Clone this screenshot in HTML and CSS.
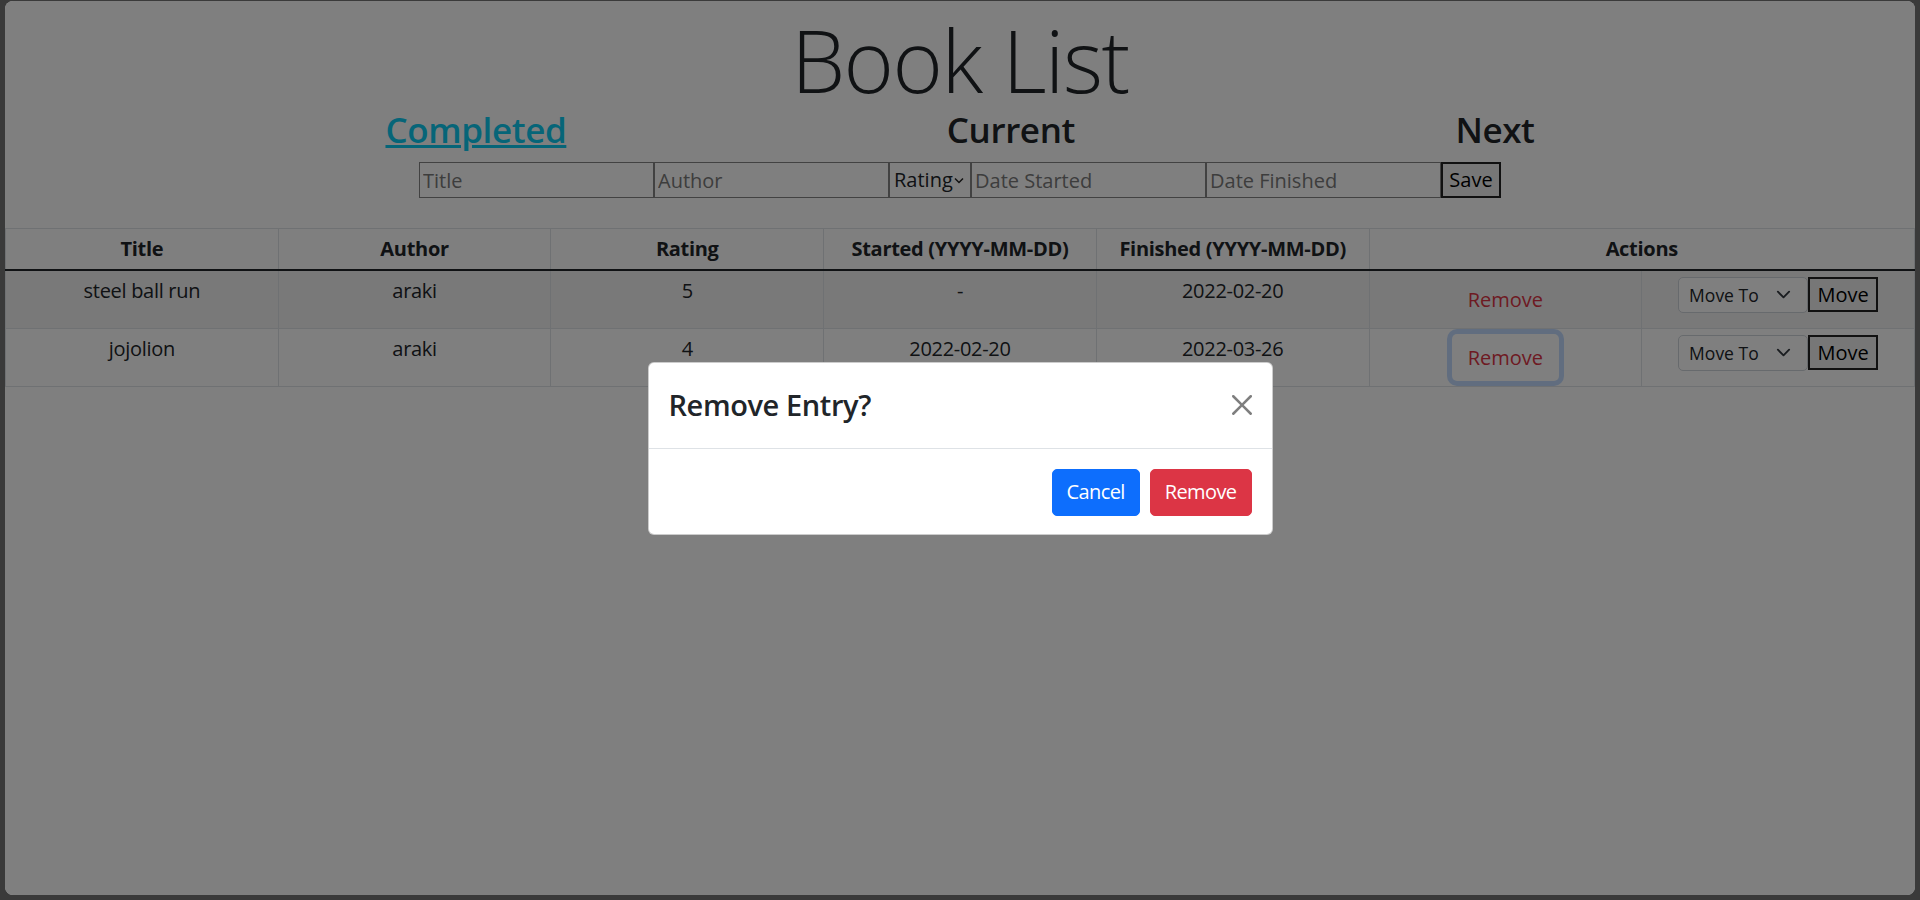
FILE: index.html
```html
<!DOCTYPE html>
<html lang="en">
<head>
<meta charset="utf-8">
<title>Book List</title>
<link rel="stylesheet" href="styles.css">
</head>
<body>
<div class="window">
  <main class="app">
    <h1 class="page-title">Book List</h1>
    <nav class="tabs">
      <h3 class="tab"><a class="tab-link" href="#">Completed</a></h3>
      <h3 class="tab">Current</h3>
      <h3 class="tab">Next</h3>
    </nav>
    <form class="entry-form">
      <input class="field" type="text" placeholder="Title">
      <input class="field" type="text" placeholder="Author">
      <span class="rating-wrap">
        <select class="rating-select">
          <option>Rating</option>
          <option>1</option>
          <option>2</option>
          <option>3</option>
          <option>4</option>
          <option>5</option>
        </select>
        <svg class="rating-chevron" viewBox="0 0 10 6" aria-hidden="true"><path d="M1 1l4 4 4-4" fill="none" stroke="#222" stroke-width="1.5"/></svg>
      </span>
      <input class="field" type="text" placeholder="Date Started">
      <input class="field" type="text" placeholder="Date Finished">
      <button class="plain-btn save-btn" type="button">Save</button>
    </form>
    <table class="book-table">
      <colgroup>
        <col><col><col><col><col><col><col>
      </colgroup>
      <thead>
        <tr>
          <th>Title</th>
          <th>Author</th>
          <th>Rating</th>
          <th>Started (YYYY-MM-DD)</th>
          <th>Finished (YYYY-MM-DD)</th>
          <th colspan="2">Actions</th>
        </tr>
      </thead>
      <tbody>
        <tr class="striped">
          <td>steel ball run</td>
          <td>araki</td>
          <td>5</td>
          <td>-</td>
          <td>2022-02-20</td>
          <td><button class="btn btn-remove" type="button">Remove</button></td>
          <td>
            <div class="move-group">
              <span class="move-wrap">
                <select class="move-select"><option>Move To</option><option>Completed</option><option>Current</option><option>Next</option></select>
                <svg class="move-chevron" viewBox="0 0 16 16" aria-hidden="true"><path d="M2 5l6 6 6-6" fill="none" stroke="#343a40" stroke-width="2" stroke-linecap="round" stroke-linejoin="round"/></svg>
              </span>
              <button class="plain-btn move-btn" type="button">Move</button>
            </div>
          </td>
        </tr>
        <tr>
          <td>jojolion</td>
          <td>araki</td>
          <td>4</td>
          <td>2022-02-20</td>
          <td>2022-03-26</td>
          <td><button class="btn btn-remove is-focused" type="button">Remove</button></td>
          <td>
            <div class="move-group">
              <span class="move-wrap">
                <select class="move-select"><option>Move To</option><option>Completed</option><option>Current</option><option>Next</option></select>
                <svg class="move-chevron" viewBox="0 0 16 16" aria-hidden="true"><path d="M2 5l6 6 6-6" fill="none" stroke="#343a40" stroke-width="2" stroke-linecap="round" stroke-linejoin="round"/></svg>
              </span>
              <button class="plain-btn move-btn" type="button">Move</button>
            </div>
          </td>
        </tr>
      </tbody>
    </table>
  </main>

  <div class="backdrop"></div>
  <div class="modal-layer">
    <div class="modal" role="dialog">
      <div class="modal-header">
        <h4 class="modal-title">Remove Entry?</h4>
        <button class="btn-close" type="button" aria-label="Close">
          <svg viewBox="0 0 16 16" aria-hidden="true"><path d="M.293.293a1 1 0 011.414 0L8 6.586 14.293.293a1 1 0 111.414 1.414L9.414 8l6.293 6.293a1 1 0 01-1.414 1.414L8 9.414l-6.293 6.293a1 1 0 01-1.414-1.414L6.586 8 .293 1.707a1 1 0 010-1.414z" fill="#000"/></svg>
        </button>
      </div>
      <div class="modal-footer">
        <button class="btn btn-modal btn-primary" type="button">Cancel</button>
        <button class="btn btn-modal btn-danger" type="button">Remove</button>
      </div>
    </div>
  </div>
</div>
</body>
</html>
```

FILE: styles.css
```css
* {
  box-sizing: border-box;
}

html,
body {
  margin: 0;
  height: 100%;
}

body {
  background: #3a3a3a;
  font-family: "Open Sans", "Noto Sans", sans-serif;
  font-size: 20px;
  line-height: 1.5;
  letter-spacing: -0.3px;
  color: #212529;
  overflow: hidden;
}

.window {
  position: relative;
  margin: 1px 5px 0;
  height: 894px;
  background: #fff;
  border-radius: 8px;
  overflow: hidden;
}

.page-title {
  margin: 0;
  padding-top: 9px;
  text-align: center;
  font-size: 86px;
  font-weight: 300;
  line-height: 99px;
  letter-spacing: -1.5px;
}

.tabs {
  display: flex;
  justify-content: space-evenly;
  height: 42px;
  margin: 0 0 11px;
}

.tab {
  margin: 0;
  font-size: 35px;
  font-weight: 600;
  line-height: 1.2;
  letter-spacing: -0.4px;
}

.tab-link {
  color: #0dcaf0;
  text-decoration: underline;
}

.entry-form {
  display: flex;
  justify-content: center;
  margin: 0 0 30px;
}

.field {
  width: 235px;
  height: 36px;
  margin: 0;
  padding: 0 3px;
  border: 1px solid #858585;
  border-radius: 0;
  font: inherit;
  font-size: 20px;
  color: #212529;
  background: #fff;
}

.field::placeholder {
  color: #7a7a7a;
  opacity: 1;
}

.rating-wrap {
  position: relative;
  display: block;
  width: 82px;
  height: 36px;
}

.rating-select {
  appearance: none;
  -webkit-appearance: none;
  width: 100%;
  height: 100%;
  margin: 0;
  padding: 0 0 0 4px;
  border: 1px solid #858585;
  border-radius: 0;
  background: #fff;
  font: inherit;
  font-size: 20px;
  color: #212529;
}

.rating-chevron {
  position: absolute;
  right: 7px;
  top: 15px;
  width: 10px;
  height: 7px;
  pointer-events: none;
}

.plain-btn {
  margin: 0;
  padding: 0;
  border: 2px solid #222;
  border-radius: 0;
  background: #efefef;
  font: inherit;
  font-size: 20px;
  color: #000;
}

.save-btn {
  width: 60px;
  height: 36px;
}

.book-table {
  width: 100%;
  table-layout: fixed;
  border-collapse: collapse;
}

.book-table th,
.book-table td {
  border: 1px solid #dee2e6;
  padding: 5px;
  text-align: center;
  vertical-align: top;
  line-height: 30px;
}

.book-table th {
  font-weight: 700;
}

.book-table thead th {
  border-bottom: 2px solid #212529;
}

.book-table tr.striped td {
  background: #f2f2f2;
}

.btn {
  display: inline-block;
  margin: 0;
  padding: 7.5px 15px;
  border: 1px solid transparent;
  border-radius: 5px;
  font: inherit;
  font-size: 20px;
  line-height: 30px;
  background: transparent;
  cursor: pointer;
}

.btn-remove {
  color: #dc3545;
}

.btn-remove.is-focused {
  box-shadow: 0 0 0 5px rgba(13, 110, 253, 0.25);
}

.move-group {
  display: flex;
  justify-content: center;
  align-items: flex-start;
  padding-top: 1px;
}

.move-wrap {
  position: relative;
  display: block;
  width: 130px;
  height: 36px;
}

.move-select {
  appearance: none;
  -webkit-appearance: none;
  width: 100%;
  height: 100%;
  margin: 0;
  padding: 0 45px 0 10px;
  border: 1px solid #ced4da;
  border-radius: 5px;
  background: #fff;
  font: inherit;
  font-size: 17.5px;
  color: #212529;
}

.move-chevron {
  position: absolute;
  right: 17px;
  top: 10px;
  width: 15px;
  height: 15px;
  pointer-events: none;
}

.move-btn {
  width: 70px;
  height: 35px;
}

.backdrop {
  position: absolute;
  inset: 0;
  background: rgba(0, 0, 0, 0.5);
}

.modal-layer {
  position: absolute;
  inset: 0;
  display: flex;
  align-items: center;
  justify-content: center;
}

.modal {
  width: 625px;
  background: #fff;
  border: 1px solid rgba(0, 0, 0, 0.2);
  border-radius: 6px;
}

.modal-header {
  display: flex;
  align-items: center;
  justify-content: space-between;
  height: 86px;
  padding: 0 20px;
  border-bottom: 1px solid #dee2e6;
}

.modal-title {
  margin: 0;
  font-size: 29px;
  font-weight: 600;
  line-height: 1.2;
  letter-spacing: -0.4px;
}

.btn-close {
  width: 20px;
  height: 20px;
  padding: 0;
  border: 0;
  background: transparent;
  opacity: 0.5;
}

.btn-close svg {
  display: block;
  width: 20px;
  height: 20px;
}

.modal-footer {
  display: flex;
  justify-content: flex-end;
  gap: 10px;
  padding: 20px 20px 18px;
}

.btn-modal {
  padding-left: 14px;
  padding-right: 14px;
  letter-spacing: -0.6px;
}

.btn-primary {
  color: #fff;
  background: #0d6efd;
  border-color: #0d6efd;
}

.btn-danger {
  color: #fff;
  background: #dc3545;
  border-color: #dc3545;
}
```
